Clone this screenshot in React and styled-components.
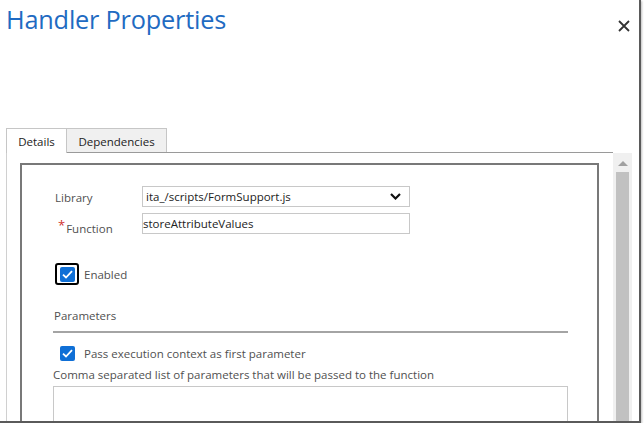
import React from 'react';
import styled, { createGlobalStyle } from 'styled-components';

const colors = {
  blue: '#1f6bc2',
  text: '#333',
  label: '#505050',
  check: '#0f6fd6',
  border: '#c8c8c8',
  frame: '#5a5a5a'
};

const GlobalStyle = createGlobalStyle`
  html, body {
    margin: 0;
    padding: 0;
    background: #fff;
  }
  body {
    font-family: "Open Sans", "Noto Sans", sans-serif;
    color: ${colors.text};
  }
`;

const StyledFrame = styled.div`
  width: 641px;
  height: 423px;
  box-sizing: border-box;
  border-right: 2px solid ${colors.frame};
  border-bottom: 2px solid ${colors.frame};
  box-shadow: 1px 1px 2px rgba(0, 0, 0, 0.25);
  overflow: hidden;
  display: flex;
  flex-direction: column;
  background: #fff;
`;

const StyledHeader = styled.div`
  height: 128px;
  flex-shrink: 0;
  display: flex;
  justify-content: space-between;
  align-items: flex-start;
  padding: 2px 9px 0 6px;
  box-sizing: border-box;
`;

const StyledTitle = styled.h1`
  margin: 0;
  font-size: 25.3px;
  font-weight: 400;
  color: ${colors.blue};
  letter-spacing: -0.2px;
`;

const StyledClose = styled.button`
  border: none;
  background: none;
  padding: 0;
  margin-top: 18px;
  width: 12px;
  height: 12px;
  cursor: pointer;
  display: flex;
`;

const StyledTabBar = styled.div`
  display: flex;
  margin: 0 26px 0 6px;
  height: 24px;
  border-bottom: 1px solid #9a9a9a;
  flex-shrink: 0;
`;

const StyledTab = styled.div`
  width: ${p => p.width}px;
  box-sizing: border-box;
  display: flex;
  align-items: center;
  justify-content: center;
  font-size: 11.5px;
  color: #222;
  border: 1px solid #c6c6c6;
  border-left: ${p => (p.active ? '1px solid #c6c6c6' : 'none')};
  border-bottom: none;
  background: ${p => (p.active ? '#fff' : '#f0f0f0')};
  margin-bottom: ${p => (p.active ? '-1px' : '0')};
  height: ${p => (p.active ? '25px' : '24px')};
  padding-top: ${p => (p.active ? '0' : '1px')};
`;

const StyledPanel = styled.div`
  flex: 1;
  display: flex;
  margin: 0 7px 0 6px;
  border-left: 1px solid #d0d0d0;
  min-height: 0;
`;

const StyledContent = styled.div`
  flex: 1;
  padding: 10px 14px 0 13px;
`;

const StyledScrollbar = styled.div`
  width: 19px;
  background: #f0f0f0;
  display: flex;
  flex-direction: column;
  align-items: center;
`;

const StyledArrow = styled.div`
  width: 0;
  height: 0;
  margin-top: 8px;
  border-left: 5px solid transparent;
  border-right: 5px solid transparent;
  border-bottom: 5px solid #a0a0a0;
`;

const StyledThumb = styled.div`
  margin-top: 6px;
  width: 13px;
  flex: 1;
  background: #c1c1c1;
`;

const StyledBox = styled.div`
  border: 2px solid #787878;
  border-bottom: none;
  height: 100%;
  box-sizing: border-box;
  padding: 21px 29px 0 31px;
`;

const StyledGrid = styled.div`
  display: grid;
  grid-template-columns: 89px 268px;
  row-gap: 6px;
  align-items: start;
`;

const StyledLabel = styled.label`
  font-size: 11.5px;
  color: ${colors.label};
  padding: ${p => (p.low ? '8px 0 0 5px' : '4px 0 0 2px')};
  line-height: 15px;
`;

const StyledRequired = styled.span`
  color: #d0312d;
  font-size: 13px;
  margin-right: 1px;
  position: relative;
  top: -3px;
`;

const StyledField = styled.div`
  height: 21px;
  box-sizing: border-box;
  border: 1px solid ${colors.border};
  display: flex;
  align-items: center;
  justify-content: space-between;
  padding: 0 ${p => (p.select ? '8px' : '0')} 0 ${p => (p.select ? '3px' : '0')};
  font-size: 11.5px;
  color: #222;
`;

const StyledCheckRow = styled.div`
  display: flex;
  align-items: center;
  gap: ${p => p.gap}px;
  margin: ${p => p.margin};
  font-size: 11.5px;
  color: ${colors.label};
`;

const StyledFocusRing = styled.span`
  width: 24px;
  height: 22px;
  box-sizing: border-box;
  border: 2px solid #000;
  border-radius: 3px;
  display: flex;
  align-items: center;
  justify-content: center;
`;

const StyledCheck = styled.span`
  width: 15px;
  height: 15px;
  border-radius: 2px;
  background: ${colors.check};
  display: flex;
  align-items: center;
  justify-content: center;
`;

const StyledSection = styled.div`
  font-size: 11.5px;
  color: ${colors.label};
  margin-top: 23px;
  padding: 0 0 8px 1px;
  border-bottom: 2px solid #a4a4a4;
  line-height: 15px;
`;

const StyledHint = styled.div`
  font-size: 11.5px;
  color: ${colors.label};
  line-height: 15px;
  margin-top: 6px;
`;

const StyledTextArea = styled.div`
  margin-top: 4px;
  height: 60px;
  border: 1px solid ${colors.border};
`;

const CloseIcon = () => (
  <svg width="12" height="12" viewBox="0 0 12 12">
    <path d="M1 1 L11 11 M11 1 L1 11" stroke="#333" strokeWidth="1.8" fill="none" />
  </svg>
);

const Chevron = () => (
  <svg width="11" height="7" viewBox="0 0 11 7">
    <path d="M1 1 L5.5 5.5 L10 1" stroke="#111" strokeWidth="2.2" fill="none" />
  </svg>
);

const Check = () => (
  <svg width="11" height="9" viewBox="0 0 11 9">
    <path d="M1 4.6 L4 7.5 L10 1.2" stroke="#fff" strokeWidth="1.8" fill="none" />
  </svg>
);

const Checkbox = ({ focused }) =>
  focused ? (
    <StyledFocusRing>
      <StyledCheck><Check /></StyledCheck>
    </StyledFocusRing>
  ) : (
    <StyledCheck><Check /></StyledCheck>
  );

const App = () => (
  <StyledFrame>
    <GlobalStyle />
    <StyledHeader>
      <StyledTitle>Handler Properties</StyledTitle>
      <StyledClose aria-label="Close"><CloseIcon /></StyledClose>
    </StyledHeader>
    <StyledTabBar>
      <StyledTab active width={61}>Details</StyledTab>
      <StyledTab width={100}>Dependencies</StyledTab>
    </StyledTabBar>
    <StyledPanel>
      <StyledContent>
        <StyledBox>
          <StyledGrid>
            <StyledLabel>Library</StyledLabel>
            <StyledField select>
              ita_/scripts/FormSupport.js
              <Chevron />
            </StyledField>
            <StyledLabel low><StyledRequired>*</StyledRequired>Function</StyledLabel>
            <StyledField>storeAttributeValues</StyledField>
          </StyledGrid>
          <StyledCheckRow gap={5} margin="27px 0 0 2px">
            <Checkbox focused />
            Enabled
          </StyledCheckRow>
          <StyledSection>Parameters</StyledSection>
          <StyledCheckRow gap={9} margin="13px 0 0 7px">
            <Checkbox />
            Pass execution context as first parameter
          </StyledCheckRow>
          <StyledHint>Comma separated list of parameters that will be passed to the function</StyledHint>
          <StyledTextArea />
        </StyledBox>
      </StyledContent>
      <StyledScrollbar>
        <StyledArrow />
        <StyledThumb />
      </StyledScrollbar>
    </StyledPanel>
  </StyledFrame>
);

export default App;
